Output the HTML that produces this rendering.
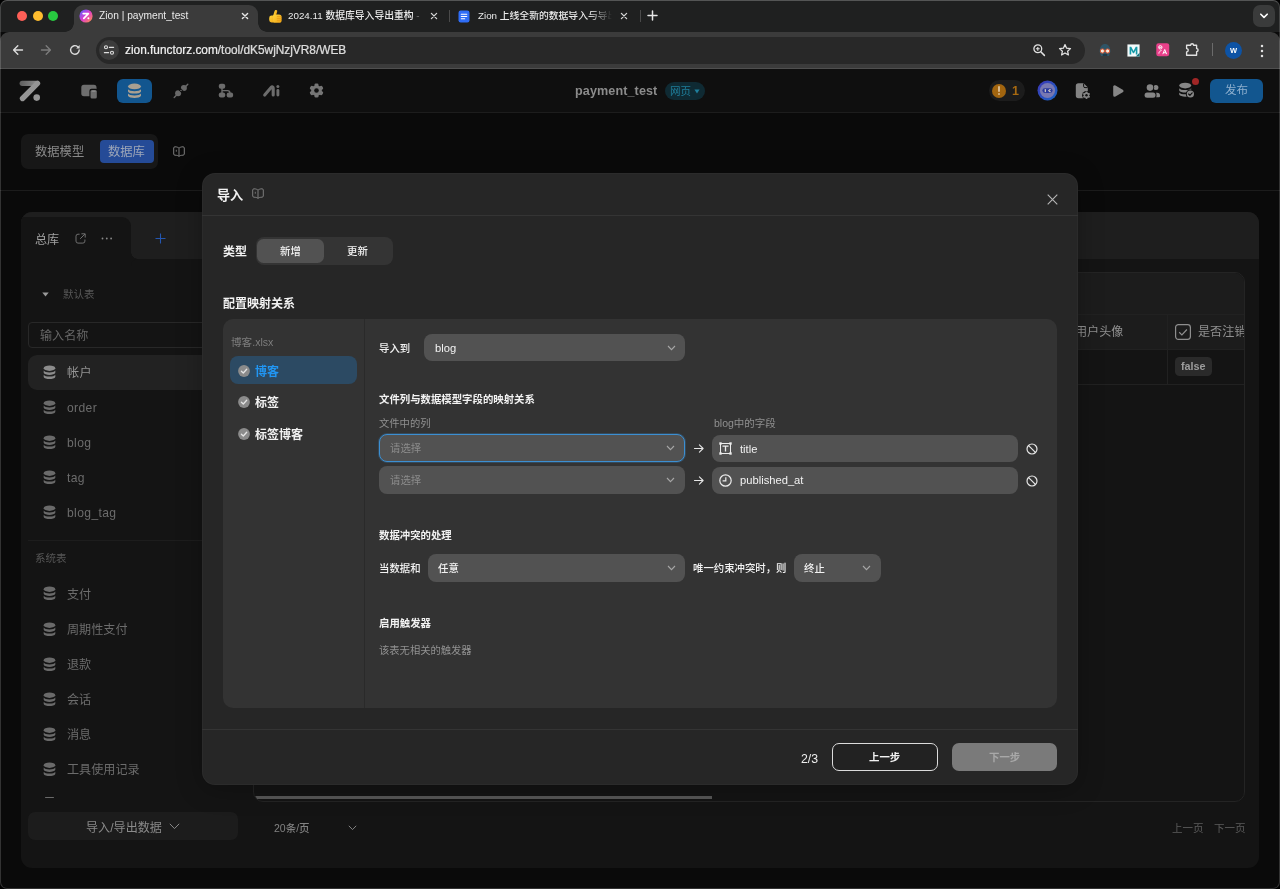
<!DOCTYPE html>
<html lang="zh-CN">
<head>
<meta charset="utf-8">
<title>Zion | payment_test</title>
<style>
*{box-sizing:border-box;margin:0;padding:0}
html,body{width:1280px;height:889px;overflow:hidden;background:#000}
body{font-family:"Liberation Sans","Noto Sans CJK SC",sans-serif;font-size:12px;color:#ddd;position:relative;-webkit-font-smoothing:antialiased}
.abs{position:absolute}
.t{position:absolute;white-space:nowrap;line-height:1;will-change:transform}
svg{position:absolute;overflow:visible}
/* ---------- browser chrome ---------- */
#win{position:absolute;left:0;top:0;width:1280px;height:889px;border-radius:7px 7px 7px 7px;overflow:hidden;background:#0a0a0a}
#winborder{position:absolute;left:0;top:0;width:1280px;height:889px;border-radius:7px 7px 7px 7px;border:1px solid rgba(255,255,255,.17);border-top-color:rgba(255,255,255,.24);pointer-events:none;z-index:99}
#tabstrip{left:0;top:0;width:1280px;height:32px;background:#1f2020}
#toolbar{left:0;top:32px;width:1280px;height:37px;background:#3b3b3b;border-radius:9px 9px 0 0;border-bottom:1px solid #4f4f4f}
#acttab{left:74px;top:5px;width:184px;height:27px;background:#3b3b3b;border-radius:9px 9px 0 0}
#acttab:before,#acttab:after{content:"";position:absolute;bottom:0;width:9px;height:9px}
#acttab:before{left:-9px;background:radial-gradient(circle at 0 0,transparent 8.5px,#3b3b3b 9px)}
#acttab:after{right:-9px;background:radial-gradient(circle at 100% 0,transparent 8.5px,#3b3b3b 9px)}
.dot{position:absolute;top:11px;width:10px;height:10px;border-radius:50%}
#urlpill{left:96px;top:37px;width:989px;height:27px;border-radius:14px;background:#282828}
.tabtxt{font-size:9.8px;color:#eaeaea;top:11px;font-weight:500}
/* ---------- app ---------- */
#apphead{left:0;top:69px;width:1280px;height:44px;background:#0f0f0f;border-bottom:1px solid #1d1d1d}
#subnav{left:0;top:113px;width:1280px;height:78px;background:#0a0a0a;border-bottom:1px solid #1c1c1c}
#panel{left:21px;top:212px;width:1238px;height:656px;border-radius:11px;background:#141414;overflow:hidden}
#strip{left:0;top:0;width:1238px;height:47px;background:#1e1e1e}
#libtab{left:0;top:5px;width:110px;height:50px;background:#141414;border-radius:0 9px 0 0}
.row{position:absolute;left:7px;width:210px;height:35px}
.row .t{left:39px;top:12px;font-size:12px;color:#6c6c6c}
.row svg{left:14px;top:10px}
/* ---------- modal ---------- */
#modal{left:202px;top:173px;width:876px;height:611.6px;border-radius:13px;background:#262626;box-shadow:0 4px 26px rgba(0,0,0,.26),inset 0 0 0 1px rgba(255,255,255,.028)}
#inner{left:21px;top:146px;width:834px;height:389px;border-radius:10px;background:#333}
.sel{position:absolute;height:28px;border-radius:8px;background:#525252}
.sel .t{top:8px;font-size:11px}
.b{font-weight:700}
.m{font-weight:500}
.w{color:#f2f2f2}
</style>
</head>
<body>
<div id="win">
<!-- ======= TAB STRIP ======= -->
<div class="abs" id="tabstrip"></div>
<div class="abs" id="toolbar"></div>
<div class="abs" id="acttab"></div>
<div class="dot" style="left:16.600px;background:#fe5f57"></div>
<div class="dot" style="left:32.500px;background:#febc2e"></div>
<div class="dot" style="left:48.400px;background:#28c840"></div>
<div class="abs" id="urlpill"></div>
<!-- active tab content -->
<svg style="left:79.200px;top:8.800px" width="14" height="14" viewBox="0 0 14 14">
  <defs><linearGradient id="zg" x1="0" y1="0" x2="1" y2="1"><stop offset=".08" stop-color="#5f5cff"/><stop offset=".5" stop-color="#e03ccc"/><stop offset=".95" stop-color="#ff9248"/></linearGradient></defs>
  <circle cx="7" cy="7" r="6.6" fill="url(#zg)"/>
  <path d="M4.2 4.6h5.2L4.8 9.4" fill="none" stroke="#fff" stroke-width="1.7" stroke-linecap="round" stroke-linejoin="round"/>
  <circle cx="9.4" cy="9.3" r="1" fill="#fff"/>
</svg>
<div class="t tabtxt" style="left:99px;font-size:10.2px">Zion | payment_test</div>
<svg style="left:240px;top:11px" width="10" height="10" viewBox="0 0 10 10"><path d="M2.400 2.400l5.200 5.200M7.600 2.400L2.400 7.600" stroke="#e8e8e8" stroke-width="1.4" stroke-linecap="round"/></svg>
<!-- tab 2 -->
<svg style="left:268px;top:8.500px" width="15" height="15" viewBox="0 0 15 15"><defs><linearGradient id="th" x1="0" y1="0" x2="1" y2="1"><stop offset="0" stop-color="#ffd43a"/><stop offset="1" stop-color="#f2a516"/></linearGradient></defs><path d="M6.400 7.200L7.900 2.300" fill="none" stroke="url(#th)" stroke-width="2.700" stroke-linecap="round"/><rect x="1.200" y="6.600" width="7" height="6.800" rx="2.400" fill="url(#th)"/><rect x="5" y="5.400" width="8.600" height="8.400" rx="2.600" fill="url(#th)"/><path d="M9.300 7.600h3.600M9.300 9.600h3.800M9.300 11.600h3.400" stroke="#e89b12" stroke-width=".7" stroke-linecap="round"/></svg>
<div class="t tabtxt" style="left:288px">2024.11 数据库导入导出重构 <span style="color:#777">-</span></div>
<svg style="left:429px;top:11px" width="10" height="10" viewBox="0 0 10 10"><path d="M2.400 2.400l5.200 5.200M7.600 2.400L2.400 7.600" stroke="#d8d8d8" stroke-width="1.3" stroke-linecap="round"/></svg>
<div class="abs" style="left:449px;top:10px;width:1px;height:12px;background:#4a4a4a"></div>
<!-- tab 3 -->
<svg style="left:458px;top:10px" width="12" height="13" viewBox="0 0 12 13">
  <rect x=".5" y=".5" width="11" height="12" rx="2.2" fill="#2f6df6"/>
  <path d="M3.3 4.2h5.4M3.3 6.5h5.4M3.3 8.8h3.4" stroke="#fff" stroke-width="1.1" stroke-linecap="round"/>
</svg>
<div class="t tabtxt" style="left:478px;width:134px;overflow:hidden;-webkit-mask-image:linear-gradient(90deg,#000 82%,transparent 100%);mask-image:linear-gradient(90deg,#000 82%,transparent 100%)">Zion 上线全新的数据导入与导出功能</div>
<svg style="left:619px;top:11px" width="10" height="10" viewBox="0 0 10 10"><path d="M2.400 2.400l5.200 5.200M7.600 2.400L2.400 7.600" stroke="#d8d8d8" stroke-width="1.3" stroke-linecap="round"/></svg>
<div class="abs" style="left:640px;top:10px;width:1px;height:12px;background:#4a4a4a"></div>
<svg style="left:647px;top:10px" width="11" height="11" viewBox="0 0 11 11"><path d="M5.5 1v9M1 5.5h9" stroke="#e6e6e6" stroke-width="1.5" stroke-linecap="round"/></svg>
<!-- tab list button -->
<div class="abs" style="left:1253px;top:5px;width:22px;height:22px;border-radius:7px;background:#3a3b3b"></div>
<svg style="left:1259px;top:12px" width="10" height="8" viewBox="0 0 10 8"><path d="M1.8 2.2L5 5.4 8.2 2.2" fill="none" stroke="#fff" stroke-width="1.6" stroke-linecap="round" stroke-linejoin="round"/></svg>
<!-- nav buttons -->
<svg style="left:12px;top:44px" width="12" height="12" viewBox="0 0 12 12"><path d="M10.5 6H1.8M5.8 1.8L1.6 6l4.2 4.2" fill="none" stroke="#dcdcdc" stroke-width="1.4" stroke-linecap="round" stroke-linejoin="round"/></svg>
<svg style="left:40px;top:44px" width="12" height="12" viewBox="0 0 12 12"><path d="M1.5 6h8.7M6.2 1.8L10.4 6 6.2 10.2" fill="none" stroke="#7c7c7c" stroke-width="1.4" stroke-linecap="round" stroke-linejoin="round"/></svg>
<svg style="left:69px;top:44px" width="12" height="12" viewBox="0 0 12 12"><path d="M10.2 6a4.3 4.3 0 1 1-1.5-3.3" fill="none" stroke="#dcdcdc" stroke-width="1.4" stroke-linecap="round"/><path d="M10.6 1v3.4H7.2z" fill="#dcdcdc"/></svg>
<!-- site info -->
<div class="abs" style="left:99px;top:40px;width:20px;height:20px;border-radius:50%;background:#3c3c3c"></div>
<svg style="left:103px;top:44px" width="12" height="12" viewBox="0 0 12 12"><circle cx="3" cy="3.3" r="1.5" fill="none" stroke="#e0e0e0" stroke-width="1.1"/><path d="M6.4 3.3h4.2" stroke="#e0e0e0" stroke-width="1.2" stroke-linecap="round"/><circle cx="9" cy="8.7" r="1.5" fill="none" stroke="#e0e0e0" stroke-width="1.1"/><path d="M1.4 8.7h4.2" stroke="#e0e0e0" stroke-width="1.2" stroke-linecap="round"/></svg>
<div class="t" style="left:125px;top:45px;font-size:11.85px;color:#f0f0f0;-webkit-text-stroke:.22px #f0f0f0">zion.functorz.com<span style="color:#d6d6d6">/tool/dK5wjNzjVR8/WEB</span></div>
<!-- zoom + star -->
<svg style="left:1032px;top:43px" width="14" height="14" viewBox="0 0 14 14"><circle cx="5.8" cy="5.8" r="3.9" fill="none" stroke="#e2e2e2" stroke-width="1.3"/><path d="M8.8 8.8l3.6 3.6" stroke="#e2e2e2" stroke-width="1.5" stroke-linecap="round"/><path d="M5.8 3.9v3.8M3.9 5.8h3.8" stroke="#e2e2e2" stroke-width="1.1"/></svg>
<svg style="left:1058px;top:43px" width="14" height="14" viewBox="0 0 14 14"><path d="M7 1.6l1.6 3.6 3.9.4-2.9 2.6.8 3.8L7 10l-3.4 2 .8-3.8L1.500 5.600l3.900-.4z" fill="none" stroke="#e2e2e2" stroke-width="1.25" stroke-linejoin="round"/></svg>
<!-- extensions -->
<svg style="left:1097px;top:42px" width="16" height="16" viewBox="0 0 16 16"><path d="M2.6 9.500C2.600 4.500 5 2 8 2s5.400 2.500 5.400 7.500L12 14H4z" fill="#2f5466"/><circle cx="5.400" cy="9" r="2.100" fill="#f4e9dc" stroke="#e2572f" stroke-width="1"/><circle cx="10.600" cy="9" r="2.100" fill="#f4e9dc" stroke="#e2572f" stroke-width="1"/><path d="M5.800 13h4.400" stroke="#17303b" stroke-width="1.400"/></svg>
<svg style="left:1127px;top:43.500px" width="13" height="13" viewBox="0 0 15 15"><rect x=".5" y=".5" width="14" height="14" fill="#f4fbfc"/><path d="M3 12V3.200h1.900L7.500 8l2.600-4.800H12V12h-1.900V6.900L8.100 10.600H6.900L4.900 6.900V12z" fill="#159aa8"/><path d="M10 14.500l4.500-4.500v4.500z" fill="#15707c"/></svg>
<svg style="left:1155.600px;top:43.300px" width="13.500" height="13.500" viewBox="0 0 15 15"><rect x=".3" y=".3" width="14.400" height="14.400" rx="2.600" fill="#e8408a"/><circle cx="4.800" cy="4.800" r="1.900" fill="none" stroke="#fff" stroke-width="1"/><path d="M3.400 4.800h2.800M3.200 11.800c0-2 1.500-3.200 3-3.600" fill="none" stroke="#fff" stroke-width="1"/><path d="M7.600 12.400l2.100-5.200 2.100 5.200M8.400 10.800h2.600" fill="none" stroke="#fff" stroke-width="1.100" stroke-linejoin="round"/></svg>
<svg style="left:1184px;top:42px" width="16" height="16" viewBox="0 0 16 16"><path d="M6.600 3.200a1.500 1.500 0 0 1 3 0h3v3.400a1.500 1.500 0 0 1 0 3v3.600H2.600V9.800a1.600 1.600 0 0 0 0-3.200V3.200z" fill="none" stroke="#e2e2e2" stroke-width="1.350" stroke-linejoin="round"/></svg>
<div class="abs" style="left:1212px;top:43px;width:1px;height:13px;background:#6b6b6b"></div>
<div class="abs" style="left:1225px;top:42px;width:17px;height:17px;border-radius:50%;background:#0d53a5"></div>
<div class="t b" style="left:1230px;top:47px;font-size:7.500px;color:#fff">W</div>
<svg style="left:1260px;top:44px" width="4" height="14" viewBox="0 0 4 14"><circle cx="2" cy="2" r="1.250" fill="#e2e2e2"/><circle cx="2" cy="7" r="1.250" fill="#e2e2e2"/><circle cx="2" cy="12" r="1.250" fill="#e2e2e2"/></svg>

<!-- ======= APP ======= -->
<div class="abs" id="apphead"></div>
<div class="abs" id="subnav"></div>
<!-- logo -->
<svg style="left:19px;top:80px" width="22" height="22" viewBox="0 0 22 22"><defs><linearGradient id="lg1" gradientUnits="userSpaceOnUse" x1="1" y1="0" x2="18" y2="0"><stop offset="0" stop-color="#5e5e5e"/><stop offset="1" stop-color="#8e8e8e"/></linearGradient></defs><path d="M3.200 3.300H17" fill="none" stroke="url(#lg1)" stroke-width="5.200" stroke-linecap="round"/><path d="M18.500 3.400L3.500 18.500" fill="none" stroke="#969696" stroke-width="5.400" stroke-linecap="round"/><circle cx="17.700" cy="17.600" r="3.300" fill="#969696"/></svg>
<!-- page icon -->
<svg style="left:81px;top:84px" width="17" height="16" viewBox="0 0 17 16"><rect x=".3" y=".8" width="15.200" height="11.400" rx="2.600" fill="#6e6e6e"/><rect x="8.400" y="4.800" width="8.400" height="10.600" rx="2.200" fill="#0f0f0f"/><rect x="9.500" y="5.900" width="6.300" height="8.500" rx="1.500" fill="#6e6e6e"/><ellipse cx="12.650" cy="7.300" rx="2.300" ry=".8" fill="#8a8a8a"/></svg>
<!-- blue db button -->
<div class="abs" style="left:117px;top:79px;width:35px;height:24px;border-radius:6px;background:#12568f"></div>
<svg style="left:127px;top:83px" width="15" height="16" viewBox="0 0 15 16"><ellipse cx="7.500" cy="3.400" rx="6.500" ry="2.800" fill="#a89f91"/><path d="M1 6.200c1.200 2.600 11.800 2.600 13 0v2.200c-1.200 2.900-11.800 2.900-13 0z" fill="#a89f91"/><path d="M1 10.600c1.200 2.600 11.800 2.600 13 0v2.200c-1.200 2.900-11.800 2.900-13 0z" fill="#a89f91"/></svg>
<!-- plug -->
<svg style="left:173px;top:83px" width="16" height="16" viewBox="0 0 16 16"><g fill="#686868" stroke="#686868"><path d="M1.200 14.400l2.200-2.200M12.600 3.400l2.200-2.200" stroke-width="1.400" stroke-linecap="round"/><circle cx="5.100" cy="10.300" r="3" stroke="none"/><circle cx="10.900" cy="4.900" r="3" stroke="none"/><path d="M7 8.600l1.200-1.200" stroke-width="1.200" stroke-linecap="round"/></g><path d="M5.300 6.400l3.800 3.800M7 4.800l3.800 3.800" stroke="#0f0f0f" stroke-width="1"/></svg>
<!-- flow -->
<svg style="left:218px;top:83px" width="16" height="15" viewBox="0 0 16 15"><g fill="#6c6c6c"><rect x=".8" y=".8" width="6.400" height="5" rx="2"/><rect x=".8" y="9.400" width="6.400" height="5" rx="2"/><rect x="8.700" y="9.400" width="6.400" height="5" rx="2"/></g><path d="M4 5v5M4 7.600h5.600a2.300 2.300 0 0 1 2.300 2.300v.4" fill="none" stroke="#6c6c6c" stroke-width="1.400"/></svg>
<!-- Ai -->
<svg style="left:262px;top:84px" width="19" height="14" viewBox="0 0 19 14"><path d="M2.700 11L9.300 3.300c.7-.8 1.900-.3 1.900.7v7" fill="none" stroke="#6c6c6c" stroke-width="3.100" stroke-linecap="round" stroke-linejoin="round"/><path d="M15.900 6.400v4.700" stroke="#6c6c6c" stroke-width="2.900" stroke-linecap="round"/><circle cx="15.900" cy="2.600" r="1.500" fill="#6c6c6c"/></svg>
<!-- gear -->
<svg style="left:309px;top:83px" width="15" height="15" viewBox="0 0 15 15"><g fill="#757575"><circle cx="7.500" cy="7.500" r="5.300"/><rect x="5.500" y=".4" width="4" height="14.200" rx="1.400"/><rect x="5.500" y=".4" width="4" height="14.200" rx="1.400" transform="rotate(60 7.500 7.500)"/><rect x="5.500" y=".4" width="4" height="14.200" rx="1.400" transform="rotate(120 7.500 7.500)"/></g><circle cx="7.500" cy="7.500" r="2.300" fill="#0f0f0f"/></svg>
<!-- title -->
<div class="t b" style="left:575px;top:85px;font-size:12.600px;color:#8b8b8b;letter-spacing:.1px">payment_test</div>
<div class="abs" style="left:665px;top:82px;width:40px;height:18px;border-radius:9px;background:#0f2a33"></div>
<div class="t" style="left:670px;top:86px;font-size:10.500px;color:#1f7f9c">网页</div>
<svg style="left:694px;top:89px" width="6" height="5" viewBox="0 0 6 5"><path d="M.4.600h5.200L3 4.400z" fill="#1f7f9c"/></svg>
<!-- right icons -->
<div class="abs" style="left:989px;top:80px;width:36px;height:21px;border-radius:10.500px;background:#1c1c1c"></div>
<div class="abs" style="left:991.500px;top:83.500px;width:14.500px;height:14.500px;border-radius:50%;background:#a2650f"></div>
<div class="abs" style="left:998px;top:86px;width:1.800px;height:6px;border-radius:1px;background:#d9b98c"></div>
<div class="abs" style="left:998px;top:93.300px;width:1.800px;height:1.800px;border-radius:1px;background:#d9b98c"></div>
<div class="t b" style="left:1011.500px;top:84.500px;font-size:12.500px;color:#a86a11">1</div>
<svg style="left:1037px;top:80.300px" width="21" height="21" viewBox="0 0 21 21"><defs><linearGradient id="bg1" x1="0" y1="0" x2="1" y2="1"><stop offset="0" stop-color="#3d35b5"/><stop offset="1" stop-color="#1b66c6"/></linearGradient></defs><circle cx="10.500" cy="10.500" r="10" fill="url(#bg1)"/><circle cx="10.500" cy="10.500" r="7.600" fill="#7778b2"/><rect x="5.400" y="8.200" width="10.200" height="4.800" rx="2.400" fill="#2b3a9e"/><path d="M8.300 9.600v2" stroke="#d8d2c4" stroke-width="1.200" stroke-linecap="round"/><path d="M13.200 9.500l-1.500 1.100 1.500 1.100" fill="none" stroke="#d8d2c4" stroke-width="1.100" stroke-linecap="round" stroke-linejoin="round"/></svg>
<!-- file gear -->
<svg style="left:1075px;top:83px" width="16" height="16" viewBox="0 0 16 16"><path d="M3.400.300h4.600c.5 0 1 .2 1.400.6l2.800 2.800c.4.400.6.900.6 1.400v5.400l-3 4.700H3.400A2.600 2.600 0 0 1 .8 12.600V2.900A2.600 2.600 0 0 1 3.400.3z" fill="#848484"/><path d="M8.600.6v2.600a1.400 1.400 0 0 0 1.400 1.400h2.600" fill="none" stroke="#0f0f0f" stroke-width="1"/><circle cx="11.500" cy="12.300" r="4.400" fill="#0f0f0f"/><g fill="#848484"><circle cx="11.500" cy="12.300" r="2.700"/><rect x="10.500" y="8.600" width="2" height="7.400" rx=".7"/><rect x="10.500" y="8.600" width="2" height="7.400" rx=".7" transform="rotate(60 11.500 12.300)"/><rect x="10.500" y="8.600" width="2" height="7.400" rx=".7" transform="rotate(120 11.500 12.300)"/></g><circle cx="11.500" cy="12.300" r="1.200" fill="#0f0f0f"/></svg>
<!-- play -->
<svg style="left:1112px;top:84px" width="13" height="14" viewBox="0 0 13 14"><path d="M2.700 2.800v8.400L10 7z" fill="#868686" stroke="#868686" stroke-width="3" stroke-linejoin="round"/></svg>
<!-- people -->
<svg style="left:1143px;top:83px" width="18" height="16" viewBox="0 0 18 16"><g fill="#868686"><circle cx="12.900" cy="4.600" r="2.500"/><path d="M12.600 9.800h1.600a2.800 2.800 0 0 1 2.800 2.800v.7a1 1 0 0 1-1 1h-3.400z"/></g><circle cx="7" cy="4.600" r="4.200" fill="#0f0f0f"/><rect x=".7" y="8.600" width="12.800" height="7.200" rx="3.200" fill="#0f0f0f"/><circle cx="7" cy="4.600" r="3.300" fill="#868686"/><rect x="1.600" y="9.500" width="10.900" height="5.300" rx="2.500" fill="#868686"/></svg>
<!-- db check -->
<svg style="left:1178px;top:82px" width="18" height="17" viewBox="0 0 18 17"><g fill="#868686"><ellipse cx="7.200" cy="3.600" rx="6" ry="2.800"/><path d="M1.200 6.200c1.100 2.500 10.900 2.500 12 0v2.200c-1.100 2.700-10.900 2.700-12 0z"/><path d="M1.200 10.400c1.100 2.500 10.900 2.500 12 0v2.200c-1.100 2.700-10.900 2.700-12 0z"/></g><circle cx="12.400" cy="12" r="4.600" fill="#0f0f0f"/><circle cx="12.400" cy="12" r="3.600" fill="#868686"/><path d="M10.600 12l1.300 1.300 2.300-2.500" fill="none" stroke="#0f0f0f" stroke-width="1.100" stroke-linecap="round" stroke-linejoin="round"/></svg>
<div class="abs" style="left:1192.300px;top:78.300px;width:7px;height:7px;border-radius:50%;background:#a12626"></div>
<!-- publish -->
<div class="abs" style="left:1210px;top:79px;width:53px;height:24px;border-radius:6px;background:#12568f"></div>
<div class="t" style="left:1225px;top:85px;font-size:11.500px;color:#8fb0cf">发布</div>
<!-- sub nav -->
<div class="abs" style="left:21px;top:134px;width:137px;height:35px;border-radius:7px;background:#171717"></div>
<div class="t" style="left:34.500px;top:145.500px;font-size:12.300px;color:#8a8a8a">数据模型</div>
<div class="abs" style="left:99.500px;top:140px;width:54px;height:23px;border-radius:4px;background:#254b97"></div>
<div class="t" style="left:108px;top:145.500px;font-size:12.300px;color:#9da6b8">数据库</div>
<svg class="book" style="left:173.300px;top:145.800px" width="12" height="11" viewBox="0 0 12 11"><path d="M6 2.200C5 1.200 3.600.8 2 .8 1.200.8.7 1.300.7 2v6c0 .7.5 1.200 1.300 1.200 1.600 0 3 .3 4 1.200 1-.9 2.400-1.200 4-1.200.8 0 1.300-.5 1.300-1.200V2c0-.7-.5-1.200-1.300-1.200-1.600 0-3 .4-4 1.400zM6 2.200v8.200" fill="none" stroke="#7c7c7c" stroke-width="1" stroke-linejoin="round"/><path d="M3.300 3.800v1.900" stroke="#7c7c7c" stroke-width=".9"/></svg>

<div class="abs" id="panel">
  <div class="abs" id="strip"></div>
  <div class="abs" id="libtab"></div>
<div class="abs" style="left:109.5px;top:40px;width:7px;height:7px;background:radial-gradient(circle at 100% 0,transparent 6.5px,#141414 7px)"></div>
<div class="abs" style="left:109.5px;top:47px;width:1130px;height:8px;background:#141414;border-radius:7px 0 0 0"></div>
<div class="t " style="left:14.2px;top:22.1px;font-size:12.1px;color:#a2a2a2;">总库</div>
<svg style="left:54px;top:21px" width="11" height="11" viewBox="0 0 11 11"><path d="M4.600 1.200H3A2 2 0 0 0 1 3.200v4.900a2 2 0 0 0 2 2h4.900a2 2 0 0 0 2-2V6.500" fill="none" stroke="#6f6f6f" stroke-width="1"/><path d="M6.400.8h3.800v3.800M10 1L5.200 5.800" fill="none" stroke="#6f6f6f" stroke-width="1"/></svg>
<svg style="left:80px;top:24.700px" width="12" height="3" viewBox="0 0 12 3"><circle cx="1.5" cy="1.5" r=".9" fill="#8a8a8a"/><circle cx="5.800" cy="1.5" r=".9" fill="#8a8a8a"/><circle cx="10.100" cy="1.5" r=".9" fill="#8a8a8a"/></svg>
<svg style="left:134.200px;top:21.200px" width="11" height="11" viewBox="0 0 11 11"><path d="M5.500.5v10M.5 5.500h10" stroke="#2456b0" stroke-width="1.100"/></svg>
<svg style="left:21px;top:79.500px" width="7" height="5" viewBox="0 0 7 5"><path d="M.3.4h6.400L3.500 4.600z" fill="#9a9a9a"/></svg>
<div class="t " style="left:42.3px;top:76.8px;font-size:10.5px;color:#575757;">默认表</div>
<div class="abs" style="left:7px;top:109.500px;width:214px;height:26px;border:1px solid #282828;border-radius:4px"></div>
<div class="t " style="left:18.9px;top:118.1px;font-size:12.1px;color:#666;">输入名称</div>
<div class="abs" style="left:7px;top:143px;width:214px;height:35px;border-radius:9px;background:#222"></div>
<div class="abs" style="left:21.800px;top:153.0px;width:13px;height:15px"><svg width="13" height="15" viewBox="0 0 13 15"><g fill="#8c8c8c"><ellipse cx="6.5" cy="3.2" rx="5.8" ry="2.7"/><path d="M.7 5.600c1 2.500 10.600 2.500 11.600 0v2.200c-1 2.800-10.600 2.800-11.600 0z"/><path d="M.7 9.700c1 2.500 10.600 2.500 11.600 0v2.200c-1 2.800-10.600 2.800-11.600 0z"/></g></svg></div>
<div class="t " style="left:45.8px;top:155.4px;font-size:12.1px;color:#939393;letter-spacing:.38px">帐户</div>
<div class="abs" style="left:21.800px;top:188.0px;width:13px;height:15px"><svg width="13" height="15" viewBox="0 0 13 15"><g fill="#6a6a6a"><ellipse cx="6.5" cy="3.2" rx="5.8" ry="2.7"/><path d="M.7 5.600c1 2.500 10.600 2.500 11.600 0v2.200c-1 2.800-10.600 2.800-11.600 0z"/><path d="M.7 9.700c1 2.500 10.600 2.500 11.600 0v2.200c-1 2.800-10.600 2.800-11.600 0z"/></g></svg></div>
<div class="t " style="left:45.8px;top:190.4px;font-size:12.1px;color:#6c6c6c;letter-spacing:.38px">order</div>
<div class="abs" style="left:21.800px;top:223.0px;width:13px;height:15px"><svg width="13" height="15" viewBox="0 0 13 15"><g fill="#6a6a6a"><ellipse cx="6.5" cy="3.2" rx="5.8" ry="2.7"/><path d="M.7 5.600c1 2.500 10.600 2.500 11.600 0v2.200c-1 2.800-10.600 2.800-11.600 0z"/><path d="M.7 9.700c1 2.500 10.600 2.500 11.600 0v2.200c-1 2.800-10.600 2.800-11.600 0z"/></g></svg></div>
<div class="t " style="left:45.8px;top:225.4px;font-size:12.1px;color:#6c6c6c;letter-spacing:.38px">blog</div>
<div class="abs" style="left:21.800px;top:258.0px;width:13px;height:15px"><svg width="13" height="15" viewBox="0 0 13 15"><g fill="#6a6a6a"><ellipse cx="6.5" cy="3.2" rx="5.8" ry="2.7"/><path d="M.7 5.600c1 2.500 10.600 2.500 11.600 0v2.200c-1 2.800-10.600 2.800-11.600 0z"/><path d="M.7 9.700c1 2.500 10.600 2.500 11.600 0v2.200c-1 2.800-10.600 2.800-11.600 0z"/></g></svg></div>
<div class="t " style="left:45.8px;top:260.4px;font-size:12.1px;color:#6c6c6c;letter-spacing:.38px">tag</div>
<div class="abs" style="left:21.800px;top:293.0px;width:13px;height:15px"><svg width="13" height="15" viewBox="0 0 13 15"><g fill="#6a6a6a"><ellipse cx="6.5" cy="3.2" rx="5.8" ry="2.7"/><path d="M.7 5.600c1 2.500 10.600 2.500 11.600 0v2.200c-1 2.800-10.600 2.800-11.600 0z"/><path d="M.7 9.700c1 2.500 10.600 2.500 11.600 0v2.200c-1 2.800-10.600 2.800-11.600 0z"/></g></svg></div>
<div class="t " style="left:45.8px;top:295.4px;font-size:12.1px;color:#6c6c6c;letter-spacing:.38px">blog_tag</div>
<div class="abs" style="left:7px;top:327.500px;width:214px;height:1px;background:#1d1d1d"></div>
<div class="t " style="left:14.3px;top:341.1px;font-size:10.5px;color:#575757;">系统表</div>
<div class="abs" style="left:21.800px;top:374.29999999999995px;width:13px;height:15px"><svg width="13" height="15" viewBox="0 0 13 15"><g fill="#6a6a6a"><ellipse cx="6.5" cy="3.2" rx="5.8" ry="2.7"/><path d="M.7 5.600c1 2.500 10.600 2.500 11.600 0v2.200c-1 2.800-10.600 2.800-11.600 0z"/><path d="M.7 9.700c1 2.500 10.600 2.500 11.600 0v2.200c-1 2.800-10.600 2.800-11.600 0z"/></g></svg></div>
<div class="t " style="left:45.8px;top:376.8px;font-size:12.1px;color:#6c6c6c;">支付</div>
<div class="abs" style="left:21.800px;top:409.5px;width:13px;height:15px"><svg width="13" height="15" viewBox="0 0 13 15"><g fill="#6a6a6a"><ellipse cx="6.5" cy="3.2" rx="5.8" ry="2.7"/><path d="M.7 5.600c1 2.500 10.600 2.500 11.600 0v2.200c-1 2.800-10.600 2.800-11.600 0z"/><path d="M.7 9.700c1 2.500 10.600 2.500 11.600 0v2.200c-1 2.800-10.600 2.800-11.600 0z"/></g></svg></div>
<div class="t " style="left:45.8px;top:412.0px;font-size:12.1px;color:#6c6c6c;">周期性支付</div>
<div class="abs" style="left:21.800px;top:444.5px;width:13px;height:15px"><svg width="13" height="15" viewBox="0 0 13 15"><g fill="#6a6a6a"><ellipse cx="6.5" cy="3.2" rx="5.8" ry="2.7"/><path d="M.7 5.600c1 2.500 10.600 2.500 11.600 0v2.200c-1 2.800-10.600 2.800-11.600 0z"/><path d="M.7 9.700c1 2.500 10.600 2.500 11.600 0v2.200c-1 2.800-10.600 2.800-11.600 0z"/></g></svg></div>
<div class="t " style="left:45.8px;top:447.0px;font-size:12.1px;color:#6c6c6c;">退款</div>
<div class="abs" style="left:21.800px;top:479.5px;width:13px;height:15px"><svg width="13" height="15" viewBox="0 0 13 15"><g fill="#6a6a6a"><ellipse cx="6.5" cy="3.2" rx="5.8" ry="2.7"/><path d="M.7 5.600c1 2.500 10.600 2.500 11.600 0v2.200c-1 2.800-10.600 2.800-11.600 0z"/><path d="M.7 9.700c1 2.500 10.600 2.500 11.600 0v2.200c-1 2.800-10.600 2.800-11.600 0z"/></g></svg></div>
<div class="t " style="left:45.8px;top:482.0px;font-size:12.1px;color:#6c6c6c;">会话</div>
<div class="abs" style="left:21.800px;top:514.5px;width:13px;height:15px"><svg width="13" height="15" viewBox="0 0 13 15"><g fill="#6a6a6a"><ellipse cx="6.5" cy="3.2" rx="5.8" ry="2.7"/><path d="M.7 5.600c1 2.500 10.600 2.500 11.600 0v2.200c-1 2.800-10.600 2.800-11.600 0z"/><path d="M.7 9.700c1 2.500 10.600 2.500 11.600 0v2.200c-1 2.800-10.600 2.800-11.600 0z"/></g></svg></div>
<div class="t " style="left:45.8px;top:517.0px;font-size:12.1px;color:#6c6c6c;">消息</div>
<div class="abs" style="left:21.800px;top:549.5px;width:13px;height:15px"><svg width="13" height="15" viewBox="0 0 13 15"><g fill="#6a6a6a"><ellipse cx="6.5" cy="3.2" rx="5.8" ry="2.7"/><path d="M.7 5.600c1 2.500 10.600 2.500 11.600 0v2.200c-1 2.800-10.600 2.800-11.600 0z"/><path d="M.7 9.700c1 2.500 10.600 2.500 11.600 0v2.200c-1 2.800-10.600 2.800-11.600 0z"/></g></svg></div>
<div class="t " style="left:45.8px;top:552.0px;font-size:12.1px;color:#6c6c6c;">工具使用记录</div>
<div class="abs" style="left:23.500px;top:585px;width:9px;height:1.200px;border-radius:1px;background:#6a6a6a"></div>
<div class="abs" style="left:7px;top:600px;width:210px;height:27.500px;border-radius:7px;background:#1c1c1c"></div>
<div class="t " style="left:65.0px;top:609.6px;font-size:12.1px;color:#8a8a8a;">导入/导出数据</div>
<svg style="left:147.500px;top:611px" width="11" height="7" viewBox="0 0 11 7"><path d="M.8.8L5.500 5.600 10.200.8" fill="none" stroke="#8a8a8a" stroke-width="1"/></svg>
<div class="abs" style="left:232px;top:60px;width:992px;height:529.500px;border:1px solid #242424;border-radius:10px;background:#141414;overflow:hidden"><div class="abs" style="left:0;top:0;width:992px;height:41px;background:#1c1c1c"></div><div class="abs" style="left:0;top:40.500px;width:992px;height:36px;background:#1c1c1c;border-top:1px solid #212121;border-bottom:1px solid #212121"></div><div class="abs" style="left:0;top:110.500px;width:992px;height:1px;background:#212121"></div><div class="abs" style="left:912.500px;top:40.500px;width:1px;height:71px;background:#212121"></div><div class="t" style="left:821px;top:53.300px;font-size:12.100px;color:#909090">用户头像</div><svg style="left:920.500px;top:50.500px" width="16" height="16" viewBox="0 0 16 16"><rect x=".6" y=".6" width="14.800" height="14.800" rx="2.800" fill="none" stroke="#8e8e8e" stroke-width="1.200"/><path d="M4.200 8.300l2.700 2.600 5-5.400" fill="none" stroke="#8e8e8e" stroke-width="1.200"/></svg><div class="t" style="left:943.500px;top:53.300px;font-size:12.100px;color:#909090">是否注销</div><div class="abs" style="left:920.500px;top:83.500px;width:37px;height:19.500px;border-radius:4.500px;background:#2a2a2a"></div><div class="t b" style="left:926.500px;top:88px;font-size:10.800px;color:#9c9c9c">false</div><div class="abs" style="left:0;top:522.500px;width:458px;height:3.500px;background:#575757"></div></div>
<div class="t m" style="left:252.7px;top:611.0px;font-size:10.5px;color:#828282;">20条/页</div>
<svg style="left:326.500px;top:612.500px" width="9" height="6" viewBox="0 0 9 6"><path d="M.8.8L4.500 4.600 8.200.8" fill="none" stroke="#828282" stroke-width="1"/></svg>
<div class="t " style="left:1151.0px;top:611.0px;font-size:10.5px;color:#5c5c5c;">上一页</div>
<div class="t " style="left:1192.5px;top:611.0px;font-size:10.5px;color:#5c5c5c;">下一页</div>
</div>
<!-- ======= MODAL ======= -->
<div class="abs" id="modal">
<div class="t b" style="left:14.5px;top:15.8px;font-size:13.1px;color:#f2f2f2;">导入</div>
<svg style="left:50.1px;top:15.4px" width="12" height="11" viewBox="0 0 12 11"><path d="M6 2.200C5 1.200 3.600.8 2 .8 1.200.8.7 1.300.7 2v6c0 .7.5 1.200 1.300 1.200 1.600 0 3 .3 4 1.200 1-.9 2.400-1.200 4-1.200.8 0 1.300-.5 1.300-1.200V2c0-.7-.5-1.200-1.300-1.200-1.600 0-3 .4-4 1.400zM6 2.200v8.200" fill="none" stroke="#7c7c7c" stroke-width="1" stroke-linejoin="round"/><path d="M3.300 3.800v1.900" stroke="#7c7c7c" stroke-width=".9"/></svg>
<svg style="left:845px;top:21px" width="11" height="11" viewBox="0 0 11 11"><path d="M.7.7l9.600 9.600M10.300.7L.7 10.300" stroke="#b6b6b6" stroke-width="1.100"/></svg>
<div class="abs" style="left:0.0px;top:42.0px;width:876.0px;height:1.0px;background:#343434"></div>
<div class="t b" style="left:21.4px;top:73.2px;font-size:12px;color:#f2f2f2;">类型</div>
<div class="abs" style="left:53.5px;top:64.2px;width:137.7px;height:27.5px;background:#343434;border-radius:8px"></div>
<div class="abs" style="left:54.6px;top:66.0px;width:67.7px;height:24.2px;background:#525252;border-radius:6.500px"></div>
<div class="t m" style="left:77.6px;top:74.0px;font-size:10.4px;color:#f2f2f2;">新增</div>
<div class="t m" style="left:145.1px;top:74.0px;font-size:10.4px;color:#f2f2f2;">更新</div>
<div class="t b" style="left:21.4px;top:125.2px;font-size:12px;color:#f2f2f2;">配置映射关系</div>
<div class="abs" style="left:21.0px;top:146.0px;width:834.0px;height:389.0px;background:#333;border-radius:10px"></div>
<div class="abs" style="left:162.0px;top:146.0px;width:1.0px;height:389.0px;background:#2a2a2a"></div>
<div class="t " style="left:28.6px;top:163.9px;font-size:10.6px;color:#7d7d7d;">博客.xlsx</div>
<div class="abs" style="left:27.8px;top:183.3px;width:126.8px;height:28.0px;background:#2c4a63;border-radius:8px"></div>
<svg style="left:36.4px;top:191.6px" width="12" height="12" viewBox="0 0 12 12"><circle cx="6" cy="6" r="5.900" fill="#8b8b8b"/><path d="M3.400 6.200l1.900 1.800 3.400-3.700" fill="none" stroke="#e4e4e4" stroke-width="1.300" stroke-linecap="round" stroke-linejoin="round"/></svg>
<div class="t b" style="left:53.0px;top:192.8px;font-size:12px;color:#2196f3;">博客</div>
<svg style="left:36.4px;top:223.0px" width="12" height="12" viewBox="0 0 12 12"><circle cx="6" cy="6" r="5.900" fill="#8b8b8b"/><path d="M3.400 6.200l1.900 1.800 3.400-3.700" fill="none" stroke="#e4e4e4" stroke-width="1.300" stroke-linecap="round" stroke-linejoin="round"/></svg>
<div class="t b" style="left:53.0px;top:224.2px;font-size:12px;color:#f2f2f2;">标签</div>
<svg style="left:36.4px;top:254.5px" width="12" height="12" viewBox="0 0 12 12"><circle cx="6" cy="6" r="5.900" fill="#8b8b8b"/><path d="M3.400 6.200l1.900 1.800 3.400-3.700" fill="none" stroke="#e4e4e4" stroke-width="1.300" stroke-linecap="round" stroke-linejoin="round"/></svg>
<div class="t b" style="left:53.0px;top:255.7px;font-size:12px;color:#f2f2f2;">标签博客</div>
<div class="t m" style="left:177.2px;top:170.5px;font-size:10.4px;color:#f2f2f2;">导入到</div>
<div class="abs" style="left:222.1px;top:160.5px;width:261.3px;height:27.8px;background:#525252;border-radius:8px"></div>
<div class="t m" style="left:232.5px;top:170.1px;font-size:11.2px;color:#f2f2f2;">blog</div>
<svg style="left:464.8px;top:171.6px" width="9" height="6" viewBox="0 0 9 6"><path d="M1 1L4.500 4.700 8 1" fill="none" stroke="#a6a6a6" stroke-width="1.100"/></svg>
<div class="t b" style="left:177.0px;top:221.7px;font-size:10.4px;color:#f2f2f2;">文件列与数据模型字段的映射关系</div>
<div class="t " style="left:177.0px;top:246.4px;font-size:10.3px;color:#909090;">文件中的列</div>
<div class="t " style="left:511.7px;top:245.1px;font-size:10.5px;color:#909090;">blog中的字段</div>
<div class="abs" style="left:177.1px;top:261.4px;width:305.7px;height:28.0px;background:#525252;border-radius:8px;border:1px solid #3c8fd2;box-shadow:0 0 0 1px rgba(60,143,210,.25)"></div>
<div class="t " style="left:187.5px;top:271.4px;font-size:10.4px;color:#8c8c8c;">请选择</div>
<svg style="left:463.7px;top:272.4px" width="9" height="6" viewBox="0 0 9 6"><path d="M1 1L4.500 4.700 8 1" fill="none" stroke="#a6a6a6" stroke-width="1.100"/></svg>
<div class="abs" style="left:177.1px;top:293.3px;width:305.7px;height:27.7px;background:#525252;border-radius:8px"></div>
<div class="t " style="left:187.5px;top:303.4px;font-size:10.4px;color:#8c8c8c;">请选择</div>
<svg style="left:463.7px;top:304.4px" width="9" height="6" viewBox="0 0 9 6"><path d="M1 1L4.500 4.700 8 1" fill="none" stroke="#a6a6a6" stroke-width="1.100"/></svg>
<svg style="left:491.4px;top:271.0px" width="11" height="9" viewBox="0 0 11 9"><path d="M1.500 4.500h8.500M6.400.8L10.100 4.500 6.400 8.200" fill="none" stroke="#e6e6e6" stroke-width="1.100" stroke-linecap="round" stroke-linejoin="round"/></svg>
<svg style="left:491.4px;top:303.0px" width="11" height="9" viewBox="0 0 11 9"><path d="M1.500 4.500h8.500M6.400.8L10.100 4.500 6.400 8.200" fill="none" stroke="#e6e6e6" stroke-width="1.100" stroke-linecap="round" stroke-linejoin="round"/></svg>
<div class="abs" style="left:510.2px;top:261.6px;width:305.9px;height:27.4px;background:#525252;border-radius:8px"></div>
<div class="abs" style="left:510.2px;top:293.6px;width:305.9px;height:27.2px;background:#525252;border-radius:8px"></div>
<svg style="left:516.8px;top:269px" width="13" height="13" viewBox="0 0 13 13"><rect x="1.5" y="1.5" width="10" height="10" fill="none" stroke="#ececec" stroke-width="1"/><g fill="#ececec"><rect x=".3" y=".3" width="2.400" height="2.400"/><rect x="10.300" y=".3" width="2.400" height="2.400"/><rect x=".3" y="10.300" width="2.400" height="2.400"/><rect x="10.300" y="10.300" width="2.400" height="2.400"/></g><path d="M3.500 4.200h6M6.500 4.200v5.400" stroke="#ececec" stroke-width="1.300"/></svg>
<div class="t m" style="left:538.0px;top:271.1px;font-size:11.2px;color:#f2f2f2;">title</div>
<svg style="left:516.8px;top:300.6px" width="13" height="13" viewBox="0 0 13 13"><circle cx="6.5" cy="6.5" r="5.700" fill="none" stroke="#ececec" stroke-width="1.200"/><path d="M6.800 3.200v3.600H3.600" fill="none" stroke="#ececec" stroke-width="1.200"/></svg>
<div class="t m" style="left:538.0px;top:302.9px;font-size:11.2px;color:#f2f2f2;margin-top:-1px">published_at</div>
<svg style="left:824.2px;top:269.8px" width="12" height="12" viewBox="0 0 12 12"><circle cx="6" cy="6" r="5" fill="none" stroke="#e6e6e6" stroke-width="1.200"/><path d="M2.600 2.600l6.800 6.800" stroke="#e6e6e6" stroke-width="1.200"/></svg>
<svg style="left:824.2px;top:301.6px" width="12" height="12" viewBox="0 0 12 12"><circle cx="6" cy="6" r="5" fill="none" stroke="#e6e6e6" stroke-width="1.200"/><path d="M2.600 2.600l6.800 6.800" stroke="#e6e6e6" stroke-width="1.200"/></svg>
<div class="t b" style="left:177.0px;top:358.3px;font-size:10.4px;color:#f2f2f2;">数据冲突的处理</div>
<div class="t m" style="left:177.0px;top:390.8px;font-size:10.4px;color:#f2f2f2;">当数据和</div>
<div class="abs" style="left:225.5px;top:380.9px;width:257.4px;height:27.8px;background:#525252;border-radius:8px"></div>
<div class="t m" style="left:236.0px;top:390.8px;font-size:10.4px;color:#f2f2f2;">任意</div>
<svg style="left:464.8px;top:392.0px" width="9" height="6" viewBox="0 0 9 6"><path d="M1 1L4.500 4.700 8 1" fill="none" stroke="#a6a6a6" stroke-width="1.100"/></svg>
<div class="t m" style="left:491.3px;top:390.8px;font-size:10.4px;color:#f2f2f2;">唯一约束冲突时，则</div>
<div class="abs" style="left:591.8px;top:380.9px;width:87.2px;height:27.8px;background:#525252;border-radius:8px"></div>
<div class="t m" style="left:601.9px;top:390.8px;font-size:10.4px;color:#f2f2f2;">终止</div>
<svg style="left:659.8px;top:392.0px" width="9" height="6" viewBox="0 0 9 6"><path d="M1 1L4.500 4.700 8 1" fill="none" stroke="#a6a6a6" stroke-width="1.100"/></svg>
<div class="t b" style="left:177.0px;top:445.7px;font-size:10.4px;color:#f2f2f2;">启用触发器</div>
<div class="t " style="left:177.0px;top:472.7px;font-size:10.3px;color:#929292;">该表无相关的触发器</div>
<div class="abs" style="left:0.0px;top:556.0px;width:876.0px;height:1.0px;background:#343434"></div>
<div class="t " style="left:598.6px;top:580.1px;font-size:12.3px;color:#ededed;">2/3</div>
<div class="abs" style="left:630.3px;top:570.0px;width:105.6px;height:28.0px;background:#222;border:1px solid #dcdcdc;border-radius:7px"></div>
<div class="t b" style="left:667.2px;top:580.0px;font-size:10.4px;color:#f2f2f2;">上一步</div>
<div class="abs" style="left:749.9px;top:570.0px;width:105.1px;height:28.0px;background:#7a7a7a;border-radius:7px"></div>
<div class="t b" style="left:786.5px;top:580.0px;font-size:10.4px;color:#a8a8a8;">下一步</div>
</div>
</div>
<div id="winborder"></div>
</body>
</html>
